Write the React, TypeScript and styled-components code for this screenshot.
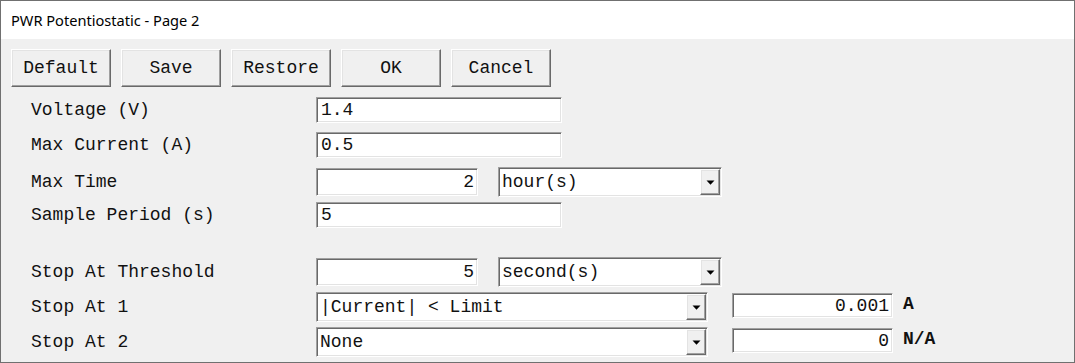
import { FC } from 'react';
import styled, { createGlobalStyle } from 'styled-components';

const GlobalStyle = createGlobalStyle`
  html, body {
    margin: 0;
    padding: 0;
    background: #f0f0f0;
  }
  body {
    overflow: hidden;
  }
`;

const mono = `"Liberation Mono", "Courier New", monospace`;

const Window = styled.div`
  box-sizing: border-box;
  width: 1075px;
  height: 363px;
  border: 1px solid #707070;
  background: #f0f0f0;
  display: flex;
  flex-direction: column;
`;

const TitleBar = styled.div`
  height: 38px;
  flex: none;
  background: #fff;
  display: flex;
  align-items: center;
  padding-left: 10px;
  font-family: "Noto Sans", sans-serif;
  font-size: 14.6px;
  color: #000;
`;

const Body = styled.div`
  flex: 1;
  padding: 10px 0 0 10px;
  color: #111;
  font-family: ${mono};
  font-size: 18px;
`;

const Toolbar = styled.div`
  display: flex;
  gap: 10px;
`;

const raised = `
  background: #f0f0f0;
  border: 1px solid;
  border-color: #fff #696969 #696969 #fff;
  box-shadow: inset -1px -1px 0 #a0a0a0, inset 1px 1px 0 #e3e3e3;
`;

const sunken = `
  background: #fff;
  border: 1px solid;
  border-color: #a0a0a0 #fff #fff #a0a0a0;
  box-shadow: inset 1px 1px 0 #696969, inset -1px -1px 0 #e3e3e3;
`;

const Button = styled.button`
  box-sizing: border-box;
  width: 100px;
  height: 38px;
  padding: 0;
  ${raised}
  font-family: ${mono};
  font-size: 18px;
  color: #111;
`;

const Form = styled.div`
  margin-top: 10px;
  padding-left: 20px;
  display: flex;
  flex-direction: column;
`;

const Row = styled.div`
  display: flex;
  align-items: flex-start;
  height: 35px;
`;

const Spacer = styled.div`
  height: 20px;
`;

const Label = styled.div<{ $h: number }>`
  width: 285px;
  height: ${p => p.$h}px;
  display: flex;
  align-items: center;
  white-space: pre;
`;

const TextBox = styled.input<{ $w: number; $h: number; $right?: boolean }>`
  box-sizing: border-box;
  width: ${p => p.$w}px;
  height: ${p => p.$h}px;
  margin: ${p => (p.$right ? '1px' : '0')} 0 0 0;
  ${sunken}
  outline: none;
  padding: 0 ${p => (p.$right ? '3px' : '0')} 0 4px;
  text-align: ${p => (p.$right ? 'right' : 'left')};
  font-family: ${mono};
  font-size: 18px;
  color: #111;
`;

const Combo = styled.div<{ $w: number; $h: number }>`
  box-sizing: border-box;
  width: ${p => p.$w}px;
  height: ${p => p.$h}px;
  ${sunken}
  display: flex;
  align-items: stretch;
`;

const ComboText = styled.span`
  flex: 1;
  display: flex;
  align-items: center;
  padding-left: 3px;
  white-space: pre;
`;

const DropButton = styled.span`
  box-sizing: border-box;
  width: 20px;
  margin: 1px;
  ${raised}
  display: flex;
  align-items: center;
  justify-content: center;
`;

const Gap = styled.div<{ $w: number }>`
  width: ${p => p.$w}px;
  flex: none;
`;

const Unit = styled.div`
  padding: 2px 0 0 10px;
  font-weight: bold;
  line-height: 20px;
`;

const Select: FC<{ w: number; h: number; value: string }> = ({ w, h, value }) => (
  <Combo $w={w} $h={h}>
    <ComboText>{value}</ComboText>
    <DropButton>
      <svg width="9" height="5" viewBox="0 0 9 5">
        <polygon points="0.5,0.5 8.5,0.5 4.5,4.8" fill="#000" />
      </svg>
    </DropButton>
  </Combo>
);

export default function App() {
  return (
    <>
      <GlobalStyle />
      <Window>
        <TitleBar>PWR Potentiostatic - Page 2</TitleBar>
        <Body>
          <Toolbar>
            {['Default', 'Save', 'Restore', 'OK', 'Cancel'].map(b => (
              <Button key={b}>{b}</Button>
            ))}
          </Toolbar>
          <Form>
            <Row>
              <Label $h={26}>Voltage (V)</Label>
              <TextBox $w={246} $h={26} defaultValue="1.4" readOnly />
            </Row>
            <Row>
              <Label $h={26}>Max Current (A)</Label>
              <TextBox $w={246} $h={26} defaultValue="0.5" readOnly />
            </Row>
            <Row>
              <Label $h={29}>Max Time</Label>
              <TextBox $w={162} $h={28} $right defaultValue="2" readOnly />
              <Gap $w={20} />
              <Select w={224} h={30} value="hour(s)" />
            </Row>
            <Row>
              <Label $h={26}>Sample Period (s)</Label>
              <TextBox $w={246} $h={26} defaultValue="5" readOnly />
            </Row>
            <Spacer />
            <Row>
              <Label $h={29}>Stop At Threshold</Label>
              <TextBox $w={162} $h={28} $right defaultValue="5" readOnly />
              <Gap $w={20} />
              <Select w={224} h={30} value="second(s)" />
            </Row>
            <Row>
              <Label $h={30}>Stop At 1</Label>
              <Select w={392} h={30} value="|Current| < Limit" />
              <Gap $w={24} />
              <TextBox $w={161} $h={25} $right defaultValue="0.001" readOnly />
              <Unit>A</Unit>
            </Row>
            <Row>
              <Label $h={30}>Stop At 2</Label>
              <Select w={392} h={30} value="None" />
              <Gap $w={24} />
              <TextBox $w={161} $h={25} $right defaultValue="0" readOnly />
              <Unit>N/A</Unit>
            </Row>
          </Form>
        </Body>
      </Window>
    </>
  );
}
